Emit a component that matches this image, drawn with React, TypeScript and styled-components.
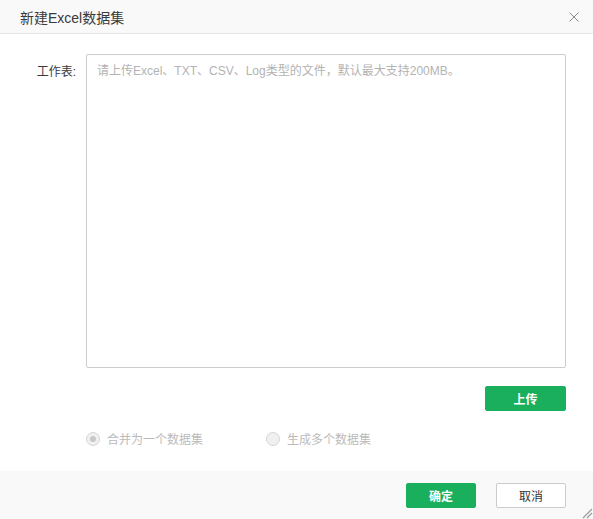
import styled, { createGlobalStyle } from "styled-components";

const GlobalStyle = createGlobalStyle`
    html, body {
        margin: 0;
        padding: 0;
        background: #fff;
    }
    body {
        font-family: "Liberation Sans", "Noto Sans CJK SC", sans-serif;
        font-size: 12px;
        color: #333;
    }
`;

const Dialog = styled.div`
    position: relative;
    width: 593px;
    height: 519px;
    display: flex;
    flex-direction: column;
    background: #fff;
    overflow: hidden;
`;

const Header = styled.div`
    height: 33px;
    display: flex;
    align-items: center;
    justify-content: space-between;
    padding: 0 10px 0 20px;
    background: #f9f9f9;
    border-bottom: 1px solid #e6e6e6;
`;

const Title = styled.span`
    font-size: 14px;
    color: #3a3a3a;
    padding-top: 1px;
`;

const Close = styled.button`
    width: 14px;
    height: 14px;
    padding: 0;
    border: none;
    background: none;
    display: flex;
    align-items: center;
    justify-content: center;
    margin-right: 2px;
`;

const Body = styled.div`
    flex: 1;
    padding: 20px 27px 0 20px;
    display: grid;
    grid-template-columns: 56px 480px;
    column-gap: 10px;
    align-content: start;
`;

const Label = styled.label`
    text-align: right;
    padding-top: 8px;
    color: #3a3a3a;
`;

const Content = styled.div`
    display: flex;
    flex-direction: column;
`;

const FileArea = styled.div`
    box-sizing: border-box;
    height: 314px;
    border: 1px solid #cccccc;
    border-radius: 2px;
    padding: 8px 10px;
    color: #b3b3b3;
    line-height: 16px;
`;

const Button = styled.button<{ $primary?: boolean; $wide?: boolean }>`
    box-sizing: border-box;
    width: ${(p) => (p.$wide ? "81px" : "70px")};
    height: 25px;
    border-radius: 2px;
    border: 1px solid ${(p) => (p.$primary ? "#1aaf5d" : "#cccccc")};
    background: ${(p) => (p.$primary ? "#1aaf5d" : "#fff")};
    color: ${(p) => (p.$primary ? "#fff" : "#333")};
    font-family: inherit;
    font-size: 12px;
    font-weight: ${(p) => (p.$primary ? 600 : 400)};
    padding: 0;
    cursor: pointer;
`;

const UploadRow = styled.div`
    display: flex;
    justify-content: flex-end;
    margin-top: 18px;
`;

const RadioRow = styled.div`
    display: flex;
    margin-top: 19px;
`;

const RadioItem = styled.div`
    display: flex;
    align-items: center;
    gap: 7px;
    color: #bbbbbb;
    white-space: nowrap;
    flex: 0 0 180px;
`;

const RadioDot = styled.span<{ $checked?: boolean }>`
    box-sizing: border-box;
    width: 14px;
    height: 14px;
    border-radius: 50%;
    border: 1px solid #d6d6d6;
    background: #f0f0f0;
    display: flex;
    align-items: center;
    justify-content: center;

    &::after {
        content: "";
        width: 6px;
        height: 6px;
        border-radius: 50%;
        background: ${(p) => (p.$checked ? "#c8c8c8" : "transparent")};
    }
`;

const Footer = styled.div`
    height: 48px;
    background: #f9f9f9;
    display: flex;
    align-items: center;
    justify-content: flex-end;
    gap: 20px;
    padding: 0 27px 0 0;
`;

const Grip = styled.svg`
    position: absolute;
    right: 0;
    bottom: 0;
`;

export default function App() {
    return (
        <>
            <GlobalStyle />
            <Dialog>
                <Header>
                    <Title>新建Excel数据集</Title>
                    <Close aria-label="close">
                        <svg width="10" height="10" viewBox="0 0 10 10">
                            <path d="M0.5 0.5 L9.5 9.5 M9.5 0.5 L0.5 9.5" stroke="#8a8a8a" strokeWidth="1" />
                        </svg>
                    </Close>
                </Header>
                <Body>
                    <Label>工作表:</Label>
                    <Content>
                        <FileArea>请上传Excel、TXT、CSV、Log类型的文件，默认最大支持200MB。</FileArea>
                        <UploadRow>
                            <Button $primary $wide>上传</Button>
                        </UploadRow>
                        <RadioRow>
                            <RadioItem>
                                <RadioDot $checked />
                                合并为一个数据集
                            </RadioItem>
                            <RadioItem>
                                <RadioDot />
                                生成多个数据集
                            </RadioItem>
                        </RadioRow>
                    </Content>
                </Body>
                <Footer>
                    <Button $primary>确定</Button>
                    <Button>取消</Button>
                </Footer>
                <Grip width="12" height="12" viewBox="0 0 12 12">
                    <path d="M11 2 L2 11 M11 6 L6 11" stroke="#9a9a9a" strokeWidth="1.2" />
                </Grip>
            </Dialog>
        </>
    );
}
